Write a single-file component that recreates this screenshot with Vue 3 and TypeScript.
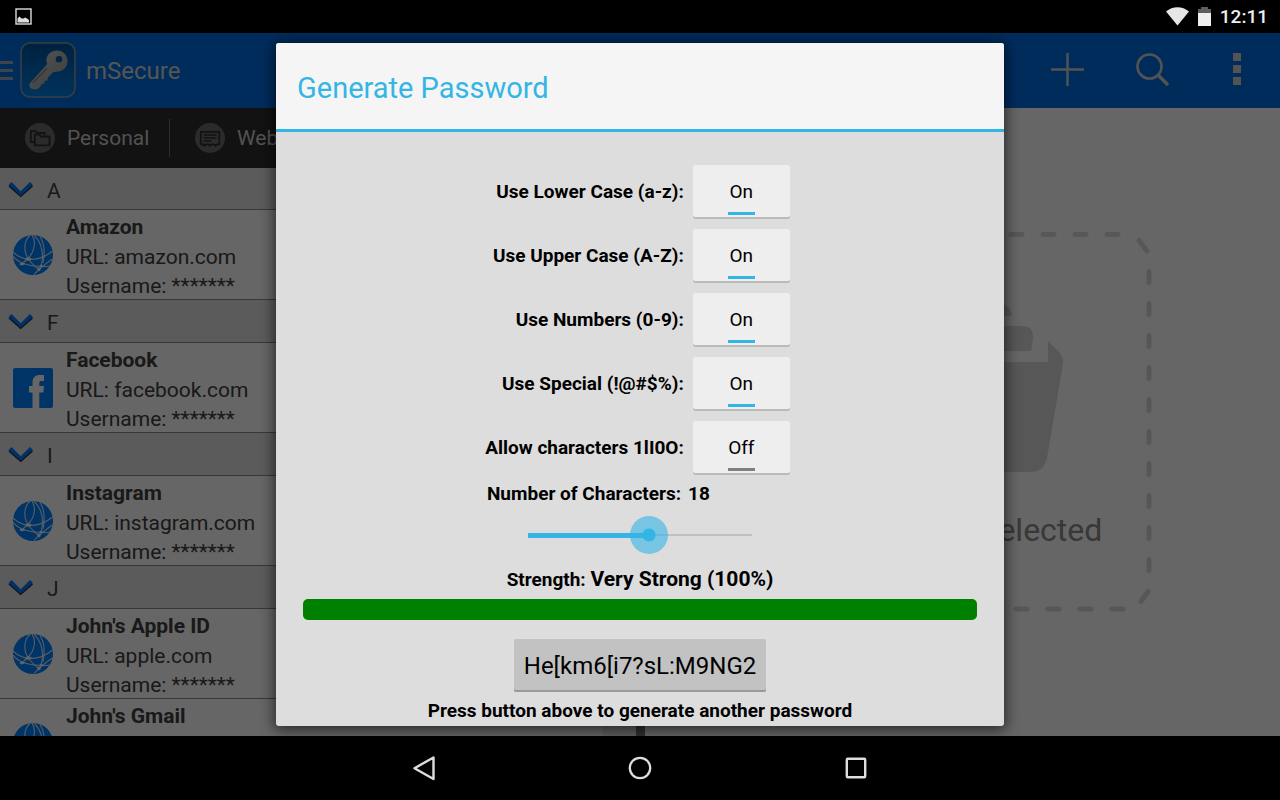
<script setup lang="ts">
import { computed, reactive, ref } from 'vue'

interface Entry {
  name: string
  url?: string
  icon: 'globe' | 'facebook'
}

interface Group {
  letter: string
  entries: Entry[]
}

interface Option {
  id: string
  label: string
  on: boolean
}

const groups: Group[] = [
  { letter: 'A', entries: [{ name: 'Amazon', url: 'amazon.com', icon: 'globe' }] },
  { letter: 'F', entries: [{ name: 'Facebook', url: 'facebook.com', icon: 'facebook' }] },
  { letter: 'I', entries: [{ name: 'Instagram', url: 'instagram.com', icon: 'globe' }] },
  {
    letter: 'J',
    entries: [
      { name: "John's Apple ID", url: 'apple.com', icon: 'globe' },
      { name: "John's Gmail", icon: 'globe' },
    ],
  },
]

const options = reactive<Option[]>([
  { id: 'lower', label: 'Use Lower Case (a-z):', on: true },
  { id: 'upper', label: 'Use Upper Case (A-Z):', on: true },
  { id: 'numbers', label: 'Use Numbers (0-9):', on: true },
  { id: 'special', label: 'Use Special (!@#$%):', on: true },
  { id: 'similar', label: 'Allow characters 1lI0O:', on: false },
])

const MIN = 4
const MAX = 30
const length = ref(18)
const strength = ref(100)
const password = ref('He[km6[i7?sL:M9NG2')
const fill = computed(() => (length.value - MIN) / (MAX - MIN))

function generate(): void {
  const sets: Record<string, string> = {
    lower: 'abcdefghijkmnopqrstuvwxyz',
    upper: 'ABCDEFGHJKLMNPQRSTUVWXYZ',
    numbers: '23456789',
    special: '!@#$%[]:?',
    similar: '1lI0O',
  }
  const pool = options.filter((o) => o.on).map((o) => sets[o.id]).join('')
  if (!pool) return
  password.value = Array.from(
    { length: length.value },
    () => pool[Math.floor(Math.random() * pool.length)],
  ).join('')
}
</script>

<template>
  <div class="screen">
    <div class="status">
      <svg width="17" height="17" viewBox="0 0 17 17">
        <rect x="1" y="1" width="15" height="15" fill="none" stroke="#ddd" stroke-width="1.4" />
        <path d="M2.500 14.500v-4l2-2 2 2h2l1.500-1 2 1 2 1.500v2.500z" fill="#ddd" />
      </svg>
      <div class="status-right">
        <svg width="23" height="19" viewBox="0 0 23 19">
          <path d="M0 4.500C6.500-1.200 16.500-1.200 23 4.500L11.500 18.500z" fill="#e6e6e6" />
        </svg>
        <svg width="13" height="19" viewBox="0 0 13 19">
          <path d="M3 0h7v2h3v5H0V2h3z" fill="#5e5e5e" />
          <path d="M0 6h13v13H0z" fill="#eee" />
        </svg>
        <time>12:11</time>
      </div>
    </div>

    <header class="appbar">
      <button class="menu" aria-label="Menu">
        <svg width="13" height="20" viewBox="0 0 13 20">
          <path d="M0 2.500h13M0 10.500h13M0 18.500h13" stroke="#a0aab8" stroke-width="3" />
        </svg>
      </button>
      <svg class="logo" width="56" height="56" viewBox="0 0 56 56">
        <defs>
          <linearGradient id="tile" x1="0" y1="0" x2="0" y2="1">
            <stop offset="0" stop-color="#00529c" />
            <stop offset="1" stop-color="#0080e6" />
          </linearGradient>
          <linearGradient id="steel" x1="0" y1="0" x2="1" y2="1">
            <stop offset="0" stop-color="#d2d2d2" />
            <stop offset="1" stop-color="#9a9a9a" />
          </linearGradient>
        </defs>
        <rect x="1" y="1" width="54" height="54" rx="9" fill="url(#tile)" stroke="#8c9aad" stroke-width="1.500" />
        <path
          fill-rule="evenodd"
          fill="url(#steel)"
          d="M26.500 20C25.500 13 31 8.500 37 8.500c6 0 10.500 4.500 10.500 10.500S43 29.800 36.500 29.800c-2 0-3 .2-4.500 1.700l-4 4-.5 3-2.500.3-1 3-2.500.2-1 2.500-2.500 2.300c-2 1-5 .8-7.500-.5-1.500-1.500-1.500-3.500-.5-5.300l16-17.500c1-1 1-2 1-3.500zM39 14a3.300 3.300 0 1 0 0 6.600 3.300 3.300 0 0 0 0-6.600z"
        />
        <path d="M13 41l14-15" stroke="#8a8a8a" stroke-width="1.500" />
      </svg>
      <h1>mSecure</h1>
      <div class="actions">
        <button aria-label="Add">
          <svg width="34" height="34" viewBox="0 0 34 34">
            <path d="M17.500 0v33M1 16.500h33" stroke="#d0d0d0" stroke-width="2.400" />
          </svg>
        </button>
        <button aria-label="Search">
          <svg width="34" height="34" viewBox="0 0 34 34">
            <circle cx="14.500" cy="13.500" r="12" fill="none" stroke="#d0d0d0" stroke-width="2.600" />
            <path d="M23 22l10 10" stroke="#d0d0d0" stroke-width="3.400" />
          </svg>
        </button>
        <button aria-label="More options">
          <svg width="34" height="34" viewBox="0 0 34 34">
            <path d="M13 0h8v8h-8zM13 12h8v8h-8zM13 24h8v8h-8z" fill="#d0d0d0" />
          </svg>
        </button>
      </div>
    </header>

    <main class="content">
      <section class="left">
        <nav class="tabs">
          <button class="tab">
            <svg width="30" height="30" viewBox="0 0 30 30">
              <circle cx="15" cy="15" r="15" fill="#6c6c6c" />
              <g fill="none" stroke="#2d2d2d" stroke-width="1.800" stroke-linejoin="round">
                <path d="M9.500 19H5.800V8.200h5l1.400 1.800h7.500v2" />
                <path d="M9.800 22.300V11.500h4.600l1.600 2h8.500v8.800z" />
              </g>
            </svg>
            <span>Personal</span>
          </button>
          <button class="tab">
            <svg width="30" height="30" viewBox="0 0 30 30">
              <circle cx="15" cy="15" r="15" fill="#6c6c6c" />
              <path
                d="M5.800 8.800h18.500v12.500h-2.500l-1.500 1.500-1.500-1.500h-2.300L15 22.800l-1.500-1.500H11l-1.500 1.500L8 21.300H5.800z"
                fill="none" stroke="#2d2d2d" stroke-width="1.800" stroke-linejoin="round"
              />
              <path d="M8.500 12h13M8.500 15h13M8.500 18h8" stroke="#2d2d2d" stroke-width="1.400" />
            </svg>
            <span>Web</span>
          </button>
        </nav>
        <div class="list">
          <div v-for="group in groups" :key="group.letter" class="group">
            <h2>
              <svg width="26" height="18" viewBox="0 0 26 18">
                <path d="M3.500 2.500l9.200 9.300L22 2.500l3 3-12.300 10.800L.5 5.500z" fill="#2a2a2a" />
                <path d="M3.500 1l9.200 9.300L22 1l3 3-12.300 10.700L.5 4z" fill="#0078ff" />
              </svg>
              <span>{{ group.letter }}</span>
            </h2>
            <div v-for="entry in group.entries" :key="entry.name" class="entry">
              <svg v-if="entry.icon === 'globe'" width="40" height="40" viewBox="0 0 40 40">
                <circle cx="20" cy="20" r="20" fill="#0080ff" />
                <g fill="none" stroke="#fff" stroke-opacity=".85" stroke-width="1.100">
                  <path d="M17 .5C10 6 11 18 15 23C22 17 23 6 19 0" />
                  <path d="M15 23C11 27 9 29 8 30" />
                  <path d="M21 0C29 8 31 20 28 32" />
                  <path d="M27 1.500C32 9 32 18 30 28" />
                  <path d="M0 17C9 26 25 28 39.500 16" />
                  <path d="M0 21C6 29 20 33 37 31" />
                  <path d="M15 24C20 30 24 33 27 36" />
                  <path d="M21 39.500C25 35 32 29 39.500 24" />
                </g>
                <g fill="#fff" fill-opacity=".85">
                  <ellipse cx="15.500" cy="24" rx="3" ry="1.800" />
                  <ellipse cx="9" cy="29" rx="2.500" ry="1.300" />
                  <circle cx="26" cy="34" r="1.800" />
                  <circle cx="28" cy="31" r="1.500" />
                </g>
              </svg>
              <svg v-else width="40" height="40" viewBox="0 0 40 40">
                <rect width="40" height="40" rx="2" fill="#0080ff" />
                <path
                  d="M19.500 40V24.500H16V18h3.500v-3.500C19.500 9.500 22 7 27 7h4v6h-2.500c-1.700 0-2.200.8-2.200 2.300V18H31l-.6 6.500h-4.100V40z"
                  fill="#fff"
                />
              </svg>
              <div class="entry-text">
                <strong>{{ entry.name }}</strong>
                <span v-if="entry.url">URL: {{ entry.url }}</span>
                <span v-if="entry.url">Username: *******</span>
              </div>
            </div>
          </div>
        </div>
      </section>
      <section class="right">
        <div class="empty">
          <svg class="dashes" width="380" height="380" viewBox="0 0 380 380">
            <g stroke="#dadada" stroke-width="5" stroke-linecap="round">
              <path d="M47 2.500H361" stroke-dasharray="11 21" />
              <path d="M367 8.500l8 10.500" />
              <path d="M377 39.500V352" stroke-dasharray="11 21" />
              <path d="M376 359.500l-7 10" />
              <path d="M351 377H45" stroke-dasharray="11 21" />
              <path d="M3 340V40" stroke-dasharray="11 21" />
            </g>
          </svg>
          <svg class="folder" width="202" height="170" viewBox="0 0 202 170">
            <path
              fill="#dadada"
              d="M76 0h56Q149 0 151 14H76zM70 24h91q12 0 11 13l-2 12H70zM187 39l10 10q6 6 5 13l-16 94q-3 14-16 14H30q-13 0-16-14L0 72V60h187z"
            />
          </svg>
          <p>No Record Selected</p>
        </div>
      </section>
    </main>

    <nav class="navbar">
      <button aria-label="Back">
        <svg width="28" height="28" viewBox="0 0 28 28">
          <path d="M23.500 3.500v21.500L4.500 14.200z" fill="none" stroke="#ddd" stroke-width="2.400" stroke-linejoin="round" />
        </svg>
      </button>
      <button aria-label="Home">
        <svg width="28" height="28" viewBox="0 0 28 28">
          <circle cx="14" cy="14" r="10.200" fill="none" stroke="#ddd" stroke-width="2.300" />
        </svg>
      </button>
      <button aria-label="Recent apps">
        <svg width="28" height="28" viewBox="0 0 28 28">
          <rect x="4.800" y="4.800" width="18.400" height="18.400" rx="1" fill="none" stroke="#ddd" stroke-width="2.400" />
        </svg>
      </button>
    </nav>

    <div class="scrim">
      <div class="dialog" role="dialog" aria-labelledby="dialog-title">
        <h2 id="dialog-title">Generate Password</h2>
        <form class="form" @submit.prevent="generate">
          <div class="options">
            <template v-for="option in options" :key="option.id">
              <label :for="option.id">{{ option.label }}</label>
              <button
                :id="option.id" type="button" class="toggle" :class="{ on: option.on }"
                :aria-pressed="option.on" @click="option.on = !option.on"
              >{{ option.on ? 'On' : 'Off' }}</button>
            </template>
          </div>
          <div class="count">
            <label for="length">Number of Characters:</label>
            <output for="length">{{ length }}</output>
          </div>
          <input
            id="length" v-model.number="length" type="range" :min="MIN" :max="MAX"
            :style="{ '--fill': fill }"
          />
          <p class="strength">Strength: <span>Very Strong ({{ strength }}%)</span></p>
          <div class="meter"><div :style="{ width: strength + '%' }"></div></div>
          <button type="submit" class="password">{{ password }}</button>
          <p>Press button above to generate another password</p>
        </form>
      </div>
    </div>
  </div>
</template>

<style>
html,
body {
  background: #000;
}
</style>

<style scoped>
* {
  box-sizing: border-box;
}

.screen {
  position: relative;
  display: flex;
  flex-direction: column;
  height: 100vh;
  overflow: hidden;
  background: #000;
  font-family: Roboto, sans-serif;
  color: #404040;
}

svg {
  display: block;
  flex: none;
}

button {
  margin: 0;
  padding: 0;
  border: 0;
  background: none;
  font: inherit;
  color: inherit;
  cursor: pointer;
}

h1,
h2,
p {
  margin: 0;
}

.status {
  flex: none;
  display: flex;
  align-items: center;
  justify-content: space-between;
  height: 33px;
  padding: 0 12px 0 15px;
}

.status-right {
  display: flex;
  align-items: center;
  gap: 9px;
  color: #eee;
  font-size: 19px;
  font-weight: 500;
}

.appbar {
  flex: none;
  display: flex;
  align-items: center;
  height: 75px;
  padding-bottom: 1px;
  background: #006ee6;
}

.menu {
  margin-right: 7px;
}

.appbar h1 {
  margin-left: 10px;
  padding-top: 2px;
  color: #d4d4d4;
  font-size: 24px;
  font-weight: 400;
}

.actions {
  display: flex;
  gap: 51px;
  margin-left: auto;
  padding-right: 26px;
}

.content {
  flex: 1;
  display: flex;
  min-height: 0;
  background: #fff;
}

.left {
  flex: 1;
  min-width: 0;
  border-right: 9px solid #737373;
  overflow: hidden;
}

.tabs {
  display: flex;
  align-items: center;
  height: 60px;
  background: #2d2d2d;
}

.tab {
  display: flex;
  align-items: center;
  gap: 12px;
  width: 170px;
  height: 38px;
  padding-left: 25px;
  border-right: 1px solid #707070;
  color: #ccc;
  font-size: 21px;
}

.list {
  border-right: 33px solid #ebebeb;
}

.group + .group {
  border-top: 1px solid #8c8c8c;
}

.group h2 {
  display: flex;
  align-items: center;
  gap: 13px;
  height: 43px;
  padding: 2px 0 0 8px;
  border-bottom: 1px solid #8c8c8c;
  background: #e4e4e4;
  font-size: 21px;
  font-weight: 400;
}

.group h2 span {
  padding-top: 2px;
}

.group:first-child h2 {
  height: 42px;
}

.entry {
  display: flex;
  align-items: center;
  gap: 13px;
  height: 89px;
  padding-left: 13px;
}

.entry + .entry {
  border-top: 1px solid #8c8c8c;
}

.entry-text {
  display: flex;
  flex-direction: column;
  align-self: flex-start;
  padding-top: 2px;
  font-size: 21px;
  line-height: 29px;
}

.entry-text strong {
  line-height: 31px;
}

.right {
  flex: 1;
  display: flex;
  align-items: center;
  justify-content: center;
}

.empty {
  position: relative;
  display: flex;
  flex-direction: column;
  align-items: center;
  width: 380px;
  height: 380px;
  padding-top: 70px;
}

.dashes {
  position: absolute;
  inset: 0;
}

.empty p {
  margin-top: 38px;
  color: #8c8c8c;
  font-size: 32px;
  line-height: 40px;
  white-space: nowrap;
}

.navbar {
  flex: none;
  display: flex;
  align-items: center;
  justify-content: center;
  gap: 188px;
  height: 64px;
}

.scrim {
  position: absolute;
  inset: 33px 0 64px;
  display: flex;
  align-items: center;
  justify-content: center;
  background: rgba(0, 0, 0, 0.6);
}

.dialog {
  width: 90%;
  max-width: 728px;
  border-radius: 3px;
  background: #ddd;
  box-shadow: 0 2px 14px 2px rgba(0, 0, 0, 0.6);
  color: #000;
}

.dialog h2 {
  padding: 25px 21px 21px;
  border-bottom: 3px solid #33b5e5;
  border-radius: 3px 3px 0 0;
  background: #f5f5f5;
  color: #33b5e5;
  font-size: 29px;
  font-weight: 400;
  line-height: 40px;
}

.form {
  display: flex;
  flex-direction: column;
  align-items: center;
  padding: 33px 27px 4px;
  font-size: 19px;
  font-weight: 700;
  line-height: 22px;
}

.options {
  display: grid;
  grid-template-columns: auto 97px;
  align-items: center;
  gap: 10px 9px;
  padding-right: 5px;
  text-align: right;
}

.toggle {
  display: flex;
  flex-direction: column;
  align-items: center;
  justify-content: space-between;
  height: 54px;
  padding: 16px 0 4px;
  border-radius: 2px;
  background: #eee;
  box-shadow: inset 0 -2px #bbb;
  font-weight: 400;
}

.toggle::after {
  content: '';
  width: 27px;
  height: 3px;
  background: #808080;
}

.toggle.on::after {
  background: #33b5e5;
}

.count {
  display: flex;
  gap: 7px;
  margin-top: 8px;
}

.count output {
  width: 105px;
}

input[type='range'] {
  appearance: none;
  width: 262px;
  height: 38px;
  margin: 11px 0 13px;
  background:
    linear-gradient(#33b5e5, #33b5e5) 19px 50% / calc((100% - 38px) * var(--fill)) 5px no-repeat,
    linear-gradient(#c0c0c0, #c0c0c0) 50% 50% / calc(100% - 38px) 2px no-repeat;
}

input[type='range']::-webkit-slider-thumb {
  appearance: none;
  width: 38px;
  height: 38px;
  border-radius: 50%;
  background: radial-gradient(circle, #33b5e5 6px, rgba(51, 181, 229, 0.6) 7px);
}

.strength {
  line-height: 24px;
}

.strength span {
  font-size: 21px;
}

.meter {
  align-self: stretch;
  height: 21px;
  margin: 7px 0 19px;
}

.meter div {
  height: 100%;
  border-radius: 5px;
  background: #008000;
}

.password {
  height: 53px;
  margin-bottom: 8px;
  padding: 0 10px;
  border-radius: 2px;
  background: #c2c2c2;
  box-shadow: inset 0 -2px #999;
  font-size: 24px;
  font-weight: 400;
}
</style>
